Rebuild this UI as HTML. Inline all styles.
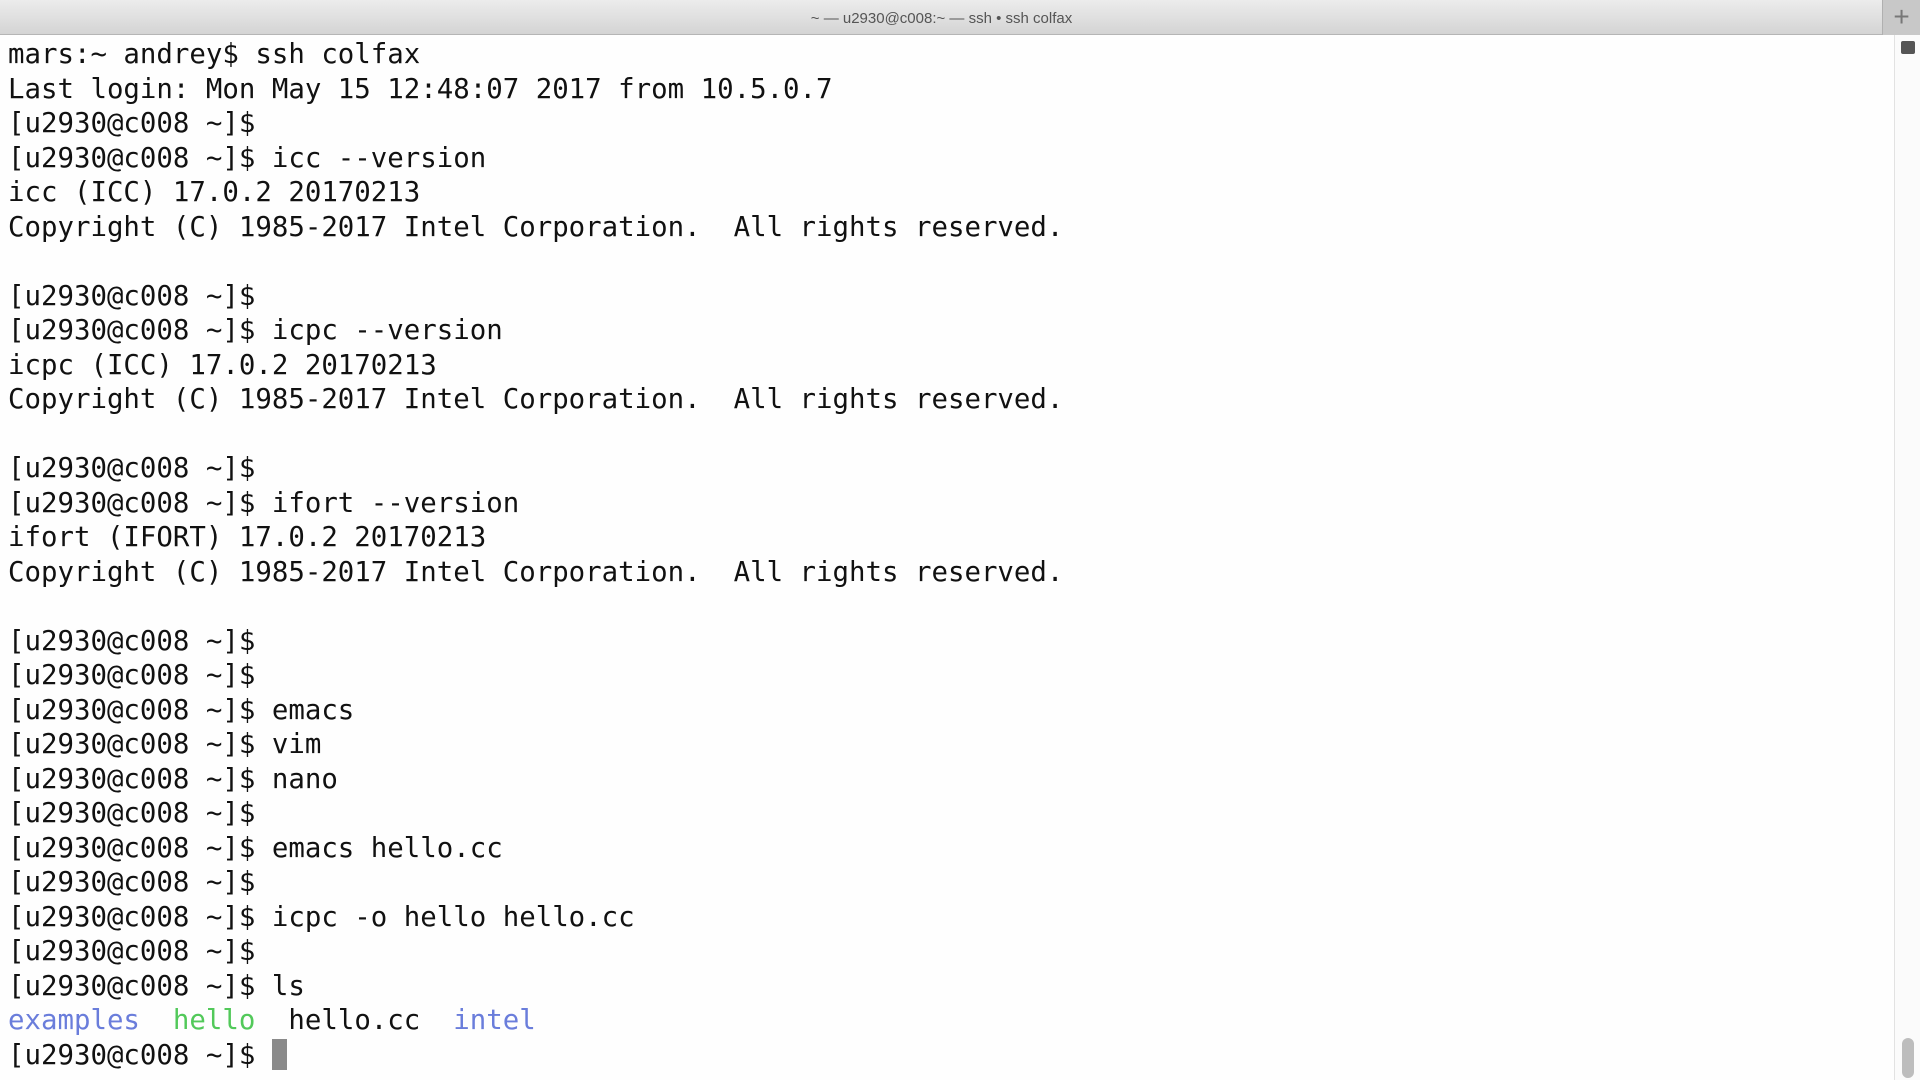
<!DOCTYPE html>
<html><head><meta charset="utf-8"><style>
html,body{margin:0;padding:0;width:1920px;height:1080px;overflow:hidden;background:#fefefe}
.tb{position:absolute;left:0;top:0;width:1920px;height:35px;background:linear-gradient(#ececec,#d4d4d4);border-bottom:1px solid #b5b5b5;box-sizing:border-box}
.tt{position:absolute;left:0;width:1883px;top:10px;text-align:center;font:15px "Liberation Sans",sans-serif;color:#555}
.plus{position:absolute;right:0;top:0;width:37px;height:35px;background:#c8c8c8;border-left:1px solid #b0b0b0;color:#777;font:28px "Liberation Sans",sans-serif;text-align:center;line-height:33px}
.sb{position:absolute;right:0;top:35px;width:25px;height:1045px;background:#fbfbfb;border-left:1px solid #e2e2e2}
.sbt{position:absolute;right:6px;bottom:2px;width:12px;height:40px;background:#bdbdbd;border-radius:6px}
.ic{position:absolute;right:5px;top:6px;width:14px;height:13px;background:#555;border-radius:2px}
pre{position:absolute;left:8px;top:38px;margin:0;font:27.4px/34.5px "DejaVu Sans Mono","Liberation Mono",monospace;color:#111}
.b{color:#6a7ddb}.g{color:#52c95a}
.cur{display:inline-block;width:15px;height:31px;background:#8a8a8a;vertical-align:-6px}
</style></head><body>
<div class="tb"><div class="tt">~ — u2930@c008:~ — ssh • ssh colfax</div><div class="plus">+</div></div>
<div class="sb"><div class="ic"></div><div class="sbt"></div></div>
<pre>mars:~ andrey$ ssh colfax
Last login: Mon May 15 12:48:07 2017 from 10.5.0.7
[u2930@c008 ~]$
[u2930@c008 ~]$ icc --version
icc (ICC) 17.0.2 20170213
Copyright (C) 1985-2017 Intel Corporation.  All rights reserved.

[u2930@c008 ~]$
[u2930@c008 ~]$ icpc --version
icpc (ICC) 17.0.2 20170213
Copyright (C) 1985-2017 Intel Corporation.  All rights reserved.

[u2930@c008 ~]$
[u2930@c008 ~]$ ifort --version
ifort (IFORT) 17.0.2 20170213
Copyright (C) 1985-2017 Intel Corporation.  All rights reserved.

[u2930@c008 ~]$
[u2930@c008 ~]$
[u2930@c008 ~]$ emacs
[u2930@c008 ~]$ vim
[u2930@c008 ~]$ nano
[u2930@c008 ~]$
[u2930@c008 ~]$ emacs hello.cc
[u2930@c008 ~]$
[u2930@c008 ~]$ icpc -o hello hello.cc
[u2930@c008 ~]$
[u2930@c008 ~]$ ls
<span class="b">examples</span>  <span class="g">hello</span>  hello.cc  <span class="b">intel</span>
[u2930@c008 ~]$ <span class="cur"></span></pre>
</body></html>
